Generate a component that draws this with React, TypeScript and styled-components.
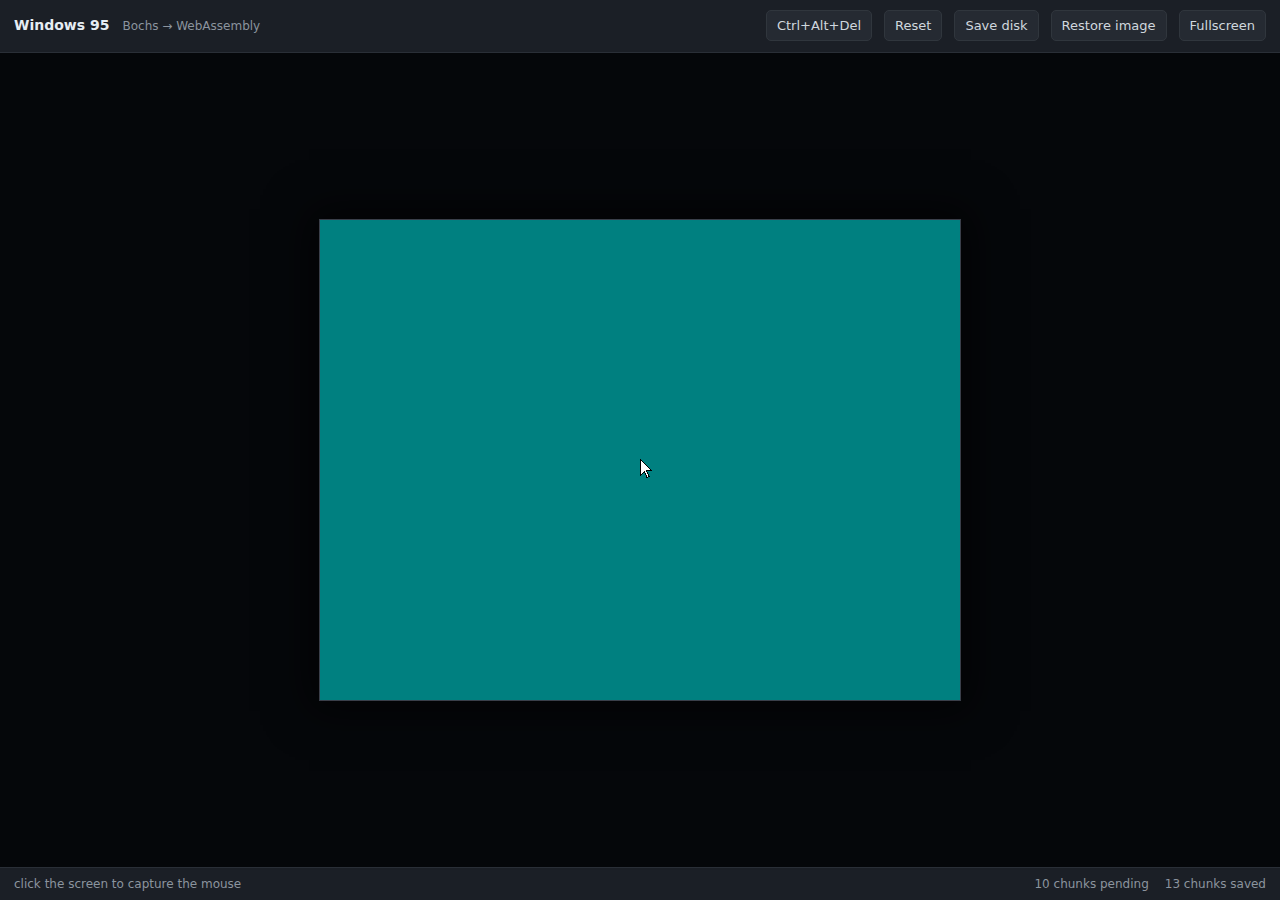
import * as React from 'react'
import styled, { createGlobalStyle } from 'styled-components'

const GlobalStyle = createGlobalStyle`
  html, body, #root {
    margin: 0;
    height: 100%;
  }
  body {
    background: #05070a;
    font-family: "DejaVu Sans", "Noto Sans", sans-serif;
    color: #c9d1d9;
  }
`

const Page = styled.div`
  display: flex;
  flex-direction: column;
  height: 100vh;
`

const Header = styled.header`
  box-sizing: border-box;
  display: flex;
  align-items: center;
  justify-content: space-between;
  height: 53px;
  padding: 0 14px 2px;
  background: #1b1f26;
  border-bottom: 1px solid #2a2f37;
  flex-shrink: 0;
`

const Brand = styled.div`
  display: flex;
  align-items: baseline;
  gap: 13px;
`

const Title = styled.h1`
  margin: 0;
  font-size: 14px;
  font-weight: bold;
  color: #e6edf3;
`

const Subtitle = styled.span`
  font-size: 12px;
  color: #8b949e;
`

const Toolbar = styled.div`
  display: flex;
  gap: 12px;
`

const Button = styled.button`
  font-family: inherit;
  font-size: 13px;
  color: #d0d7de;
  background: #252a32;
  border: 1px solid #30363d;
  border-radius: 5px;
  height: 31px;
  padding: 0 10px;
  cursor: pointer;
`

const Stage = styled.main`
  flex: 1;
  display: flex;
  align-items: center;
  justify-content: center;
  background: #05070a;
`

const Screen = styled.div`
  position: relative;
  width: 640px;
  height: 480px;
  background: #008080;
  border: 1px solid #3a3f4a;
  box-shadow: 0 0 40px 10px rgba(0, 0, 0, 0.6);
`

const Cursor = styled.svg`
  position: absolute;
  left: 320px;
  top: 239px;
`

const Footer = styled.footer`
  display: flex;
  align-items: center;
  justify-content: space-between;
  height: 32px;
  padding: 0 14px;
  background: #1b1f26;
  border-top: 1px solid #2a2f37;
  font-size: 12px;
  color: #8b949e;
  flex-shrink: 0;
`

const Stats = styled.div`
  display: flex;
  gap: 16px;
`

const App: React.FunctionComponent = () => {
  return (
    <Page>
      <GlobalStyle />
      <Header>
        <Brand>
          <Title>Windows 95</Title>
          <Subtitle>Bochs → WebAssembly</Subtitle>
        </Brand>
        <Toolbar>
          <Button>Ctrl+Alt+Del</Button>
          <Button>Reset</Button>
          <Button>Save disk</Button>
          <Button>Restore image</Button>
          <Button>Fullscreen</Button>
        </Toolbar>
      </Header>
      <Stage>
        <Screen>
          <Cursor width="12" height="20" viewBox="0 0 12 20" shapeRendering="crispEdges">
            <path
              d="M0.5 0.5 L0.5 16.5 L4.5 12.5 L7 18.5 L9 17.5 L6.5 11.5 L11.5 11.5 Z"
              fill="#fff"
              stroke="#000"
              strokeWidth="1"
            />
          </Cursor>
        </Screen>
      </Stage>
      <Footer>
        <span>click the screen to capture the mouse</span>
        <Stats>
          <span>10 chunks pending</span>
          <span>13 chunks saved</span>
        </Stats>
      </Footer>
    </Page>
  )
}

export default App
